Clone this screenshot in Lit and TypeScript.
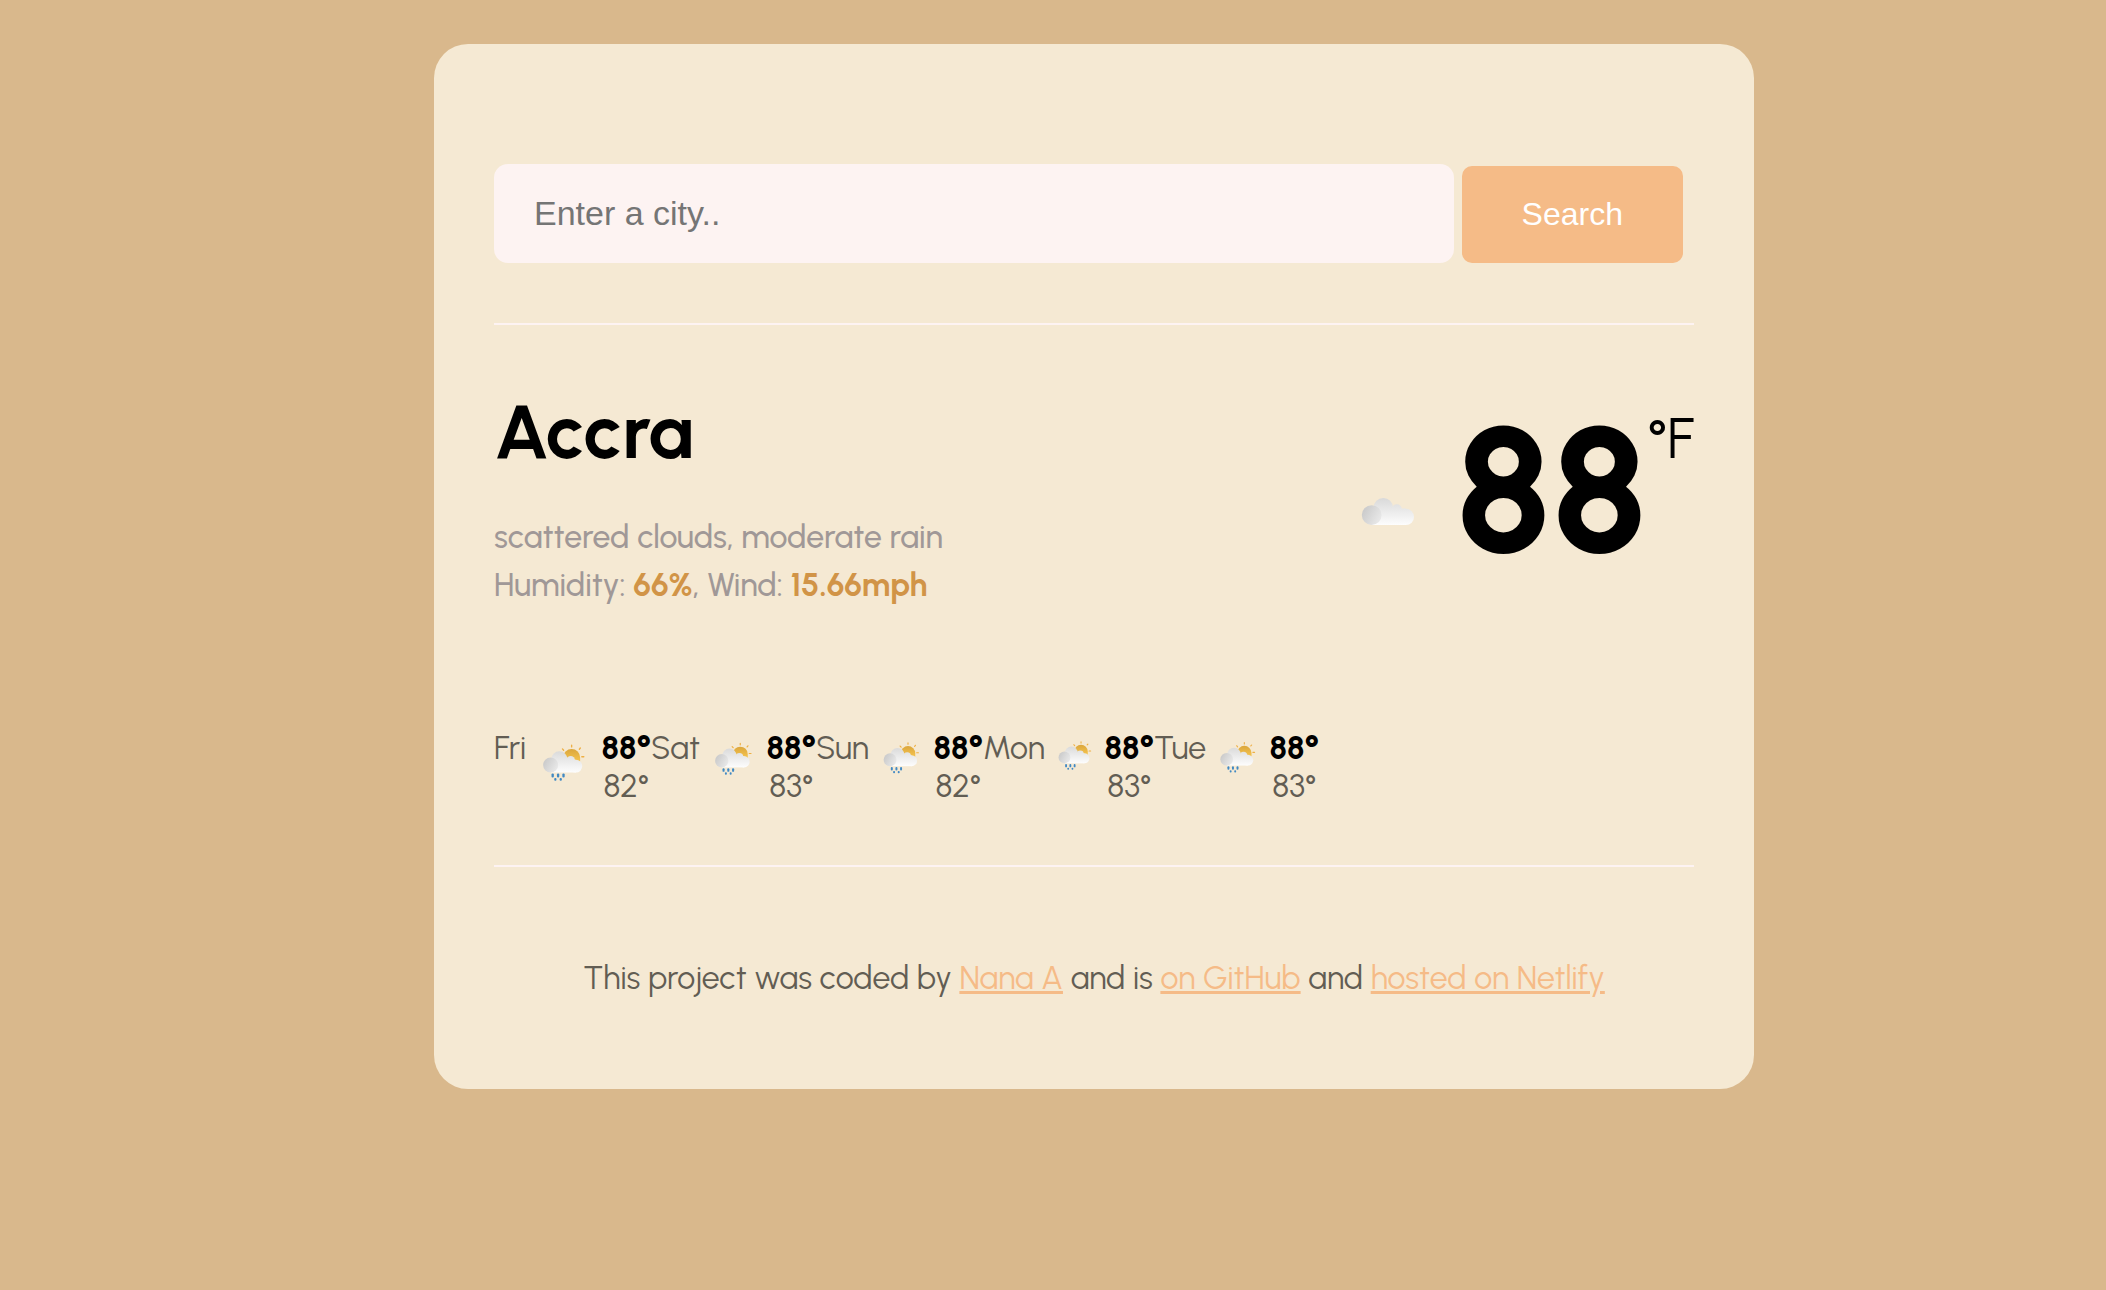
import { LitElement, html, css, svg } from "lit";
import { customElement, property } from "lit/decorators.js";

interface Day {
  name: string;
  high: number;
  low: number;
}

const FORECAST: Day[] = [
  { name: "Fri", high: 88, low: 82 },
  { name: "Sat", high: 88, low: 83 },
  { name: "Sun", high: 88, low: 82 },
  { name: "Mon", high: 88, low: 83 },
  { name: "Tue", high: 88, low: 83 },
];

const gradients = (top: number, bottom: number) => svg`
  <defs>
    <linearGradient id="body" gradientUnits="userSpaceOnUse" x1="0" y1=${top} x2="0" y2=${bottom}>
      <stop offset="0" stop-color="#d9d9d9" />
      <stop offset="1" stop-color="#fdfdfd" />
    </linearGradient>
    <linearGradient id="puff" x1="0.1" y1="0.3" x2="1" y2="0.8">
      <stop offset="0" stop-color="#cccccc" />
      <stop offset="1" stop-color="#ebebeb" />
    </linearGradient>
    <linearGradient id="sun" x1="0" y1="0" x2="0" y2="1">
      <stop offset="0" stop-color="#dba63c" />
      <stop offset="1" stop-color="#f6c550" />
    </linearGradient>
  </defs>
`;

@customElement("weather-icon")
export class WeatherIcon extends LitElement {
  @property() kind: "clouds" | "rain" = "clouds";

  static styles = css`
    :host {
      display: block;
    }
    .icon {
      display: block;
      width: 100%;
      aspect-ratio: 1;
    }
  `;

  render() {
    return this.kind === "clouds"
      ? html`<svg class="icon" viewBox="0 0 100 100" role="img" aria-label="scattered clouds">
          ${gradients(36, 63)}
          <g fill="url(#body)">
            <circle cx="45.300" cy="45.700" r="9.700" />
            <circle cx="58.800" cy="47.300" r="5" />
            <circle cx="67.900" cy="54.900" r="8.100" />
            <rect x="34" y="46.500" width="34" height="16.500" />
          </g>
          <circle cx="33.700" cy="53.100" r="9.900" fill="url(#puff)" />
        </svg>`
      : html`<svg class="icon" viewBox="0 0 78 78" role="img" aria-label="moderate rain">
          ${gradients(22, 45)}
          <path
            stroke="#eeb045"
            stroke-width="1.400"
            stroke-linecap="round"
            d="M47.200 18.500 V16.800 M38.900 21.900 L37.700 20.600 M55.200 20.900 L56.200 19.700 M57.700 28.700 H59.800"
          />
          <path fill="url(#sun)" d="M38.400 29.500 A8.800 8.800 0 0 1 56 29.500 V34 H42 Z" />
          <g fill="url(#body)">
            <circle cx="34.500" cy="31.500" r="8.500" />
            <circle cx="46.200" cy="32.500" r="4.500" />
            <circle cx="51.600" cy="38.400" r="6.600" />
            <rect x="26" y="31.800" width="25.600" height="13.200" />
          </g>
          <circle cx="25.500" cy="37.200" r="7.800" fill="url(#puff)" />
          <g fill="#4089c4">
            <rect x="26.400" y="46" width="2.400" height="4.200" rx="1.100" />
            <rect x="32" y="46" width="2.400" height="4.200" rx="1.100" />
            <rect x="37.600" y="46" width="2.400" height="4.200" rx="1.100" />
            <rect x="29.200" y="50.800" width="2.300" height="2.700" rx="1" />
            <rect x="34.800" y="50.800" width="2.300" height="2.700" rx="1" />
          </g>
        </svg>`;
  }
}

@customElement("app-root")
export class AppRoot extends LitElement {
  static styles = css`
    :host {
      display: block;
      box-sizing: border-box;
      min-height: 100vh;
      padding: 44px 40px 44px 122px;
      background: #d9b88c;
      color: #000;
      font-family: Urbanist, Lato, sans-serif;
      font-size: 32px;
    }
    .card {
      box-sizing: border-box;
      max-width: 1320px;
      margin: 0 auto;
      padding: 0 60px;
      border-radius: 34px;
      background: #f5e9d3;
    }
    .search {
      display: flex;
      align-items: flex-end;
      gap: 8px;
      padding: 120px 11px 60px 0;
      border-bottom: 2px solid #fdf3f2;
      margin: 0;
    }
    .city-input {
      flex: 1;
      min-width: 0;
      box-sizing: border-box;
      height: 99px;
      padding: 0 40px;
      border: 0;
      border-radius: 14px;
      background: #fdf3f2;
      font-family: "Liberation Sans", Arial, sans-serif;
      font-size: 34px;
    }
    .city-input::placeholder {
      color: #757575;
    }
    .submit {
      height: 97px;
      padding: 0 60px;
      border: 0;
      border-radius: 10px;
      background: #f5bb87;
      color: #fff;
      font-family: "Liberation Sans", Arial, sans-serif;
      font-size: 32px;
    }
    .current {
      display: flex;
      justify-content: space-between;
      padding-top: 62px;
    }
    .city {
      margin: 0 0 36px;
      font-size: 76px;
      line-height: 90px;
      font-weight: 700;
    }
    .details {
      margin: 0;
      line-height: 48px;
      font-weight: 500;
      color: #a09897;
    }
    .value {
      color: #d19447;
      font-weight: 700;
    }
    .reading {
      display: flex;
      align-items: flex-start;
    }
    .reading-icon {
      width: 100px;
      margin: 75px 18px 0 0;
    }
    .temperature {
      font-size: 176px;
      line-height: 208px;
      font-weight: 700;
    }
    .unit {
      font-size: 56px;
      line-height: 68px;
      padding-top: 18px;
    }
    .forecast {
      display: grid;
      grid-template-columns: 157px 165px 167px 171px 165px;
      margin: 120px 0 0;
      padding: 0 0 60px;
      border-bottom: 2px solid #fdf3f2;
      list-style: none;
      line-height: 38px;
      color: #625d53;
    }
    .day {
      display: flex;
    }
    .day-icon {
      flex: 1;
      min-width: 0;
    }
    .temps {
      text-align: center;
    }
    .high {
      color: #000;
      font-weight: 700;
    }
    .high,
    .low {
      display: block;
    }
    .credits {
      padding: 92px 0;
      text-align: center;
      line-height: 38px;
      color: #625d53;
    }
    .link {
      color: #f5bb87;
    }
  `;

  render() {
    return html`
      <main class="card">
        <form class="search" @submit=${(e: Event) => e.preventDefault()}>
          <input class="city-input" type="search" placeholder="Enter a city.." aria-label="City" />
          <button class="submit" type="submit">Search</button>
        </form>
        <section class="current">
          <div>
            <h1 class="city">Accra</h1>
            <p class="details">
              scattered clouds, moderate rain<br />
              Humidity: <strong class="value">66%</strong>, Wind:
              <strong class="value">15.66mph</strong>
            </p>
          </div>
          <div class="reading">
            <weather-icon class="reading-icon" kind="clouds"></weather-icon>
            <span class="temperature">88</span>
            <span class="unit">°F</span>
          </div>
        </section>
        <ul class="forecast">
          ${FORECAST.map(
            (d) => html`<li class="day">
              <span>${d.name}</span>
              <weather-icon class="day-icon" kind="rain"></weather-icon>
              <span class="temps">
                <span class="high">${d.high}°</span>
                <span class="low">${d.low}°</span>
              </span>
            </li>`
          )}
        </ul>
        <footer class="credits">
          This project was coded by <a class="link" href="#nana">Nana A</a> and is
          <a class="link" href="#github">on GitHub</a> and
          <a class="link" href="#netlify">hosted on Netlify</a>
        </footer>
      </main>
    `;
  }
}
